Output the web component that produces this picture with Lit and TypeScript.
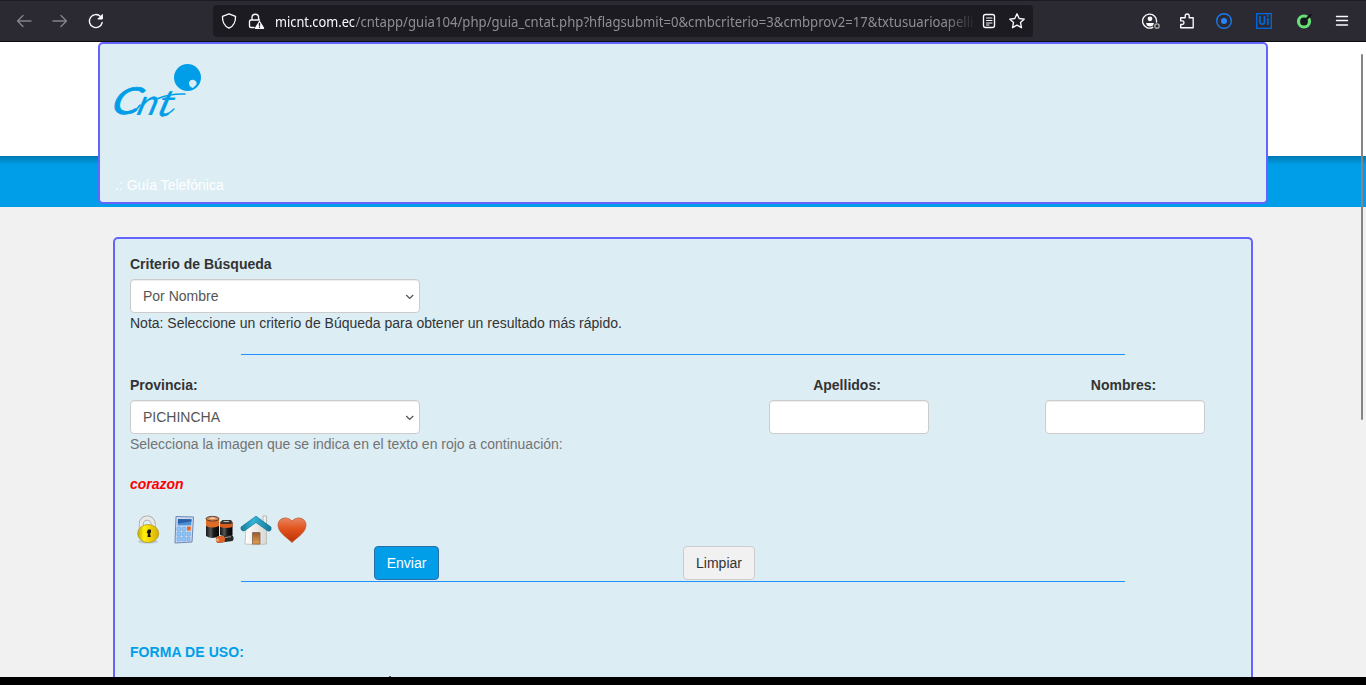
import { LitElement, html, css, svg } from "lit";
import { customElement } from "lit/decorators.js";

@customElement("browser-bar")
class BrowserBar extends LitElement {
  static styles = css`
    :host { display: flex; align-items: center; box-sizing: border-box; height: 42px; background: #2b2a33; border-top: 1px solid #1c1b22; border-bottom: 1px solid #0c0c0d; color: #fbfbfe; font-family: "Noto Sans", "Open Sans", sans-serif; padding: 0 16px; }
    svg { display: block; fill: none; stroke: #fbfbfe; stroke-width: 1.35; stroke-linecap: round; stroke-linejoin: round; flex: none; }
    .nav { display: flex; gap: 20px; width: 197px; }
    .dim { opacity: .42; }
    .address { display: flex; flex: none; align-items: center; box-sizing: border-box; width: 820px; height: 32px; padding: 0 8px; background: #1c1b22; border-radius: 4px; }
    .address .lock { margin-left: 11px; }
    .url { margin-left: 10px; overflow: visible; -webkit-mask-image: linear-gradient(90deg, #000 670px, transparent 702px); }
    .url text { stroke: none; fill: #8f8e95; font-size: 13.5px; }
    .url .host { fill: #fbfbfe; }
    .reader { margin-left: 5px; }
    .star { margin-left: 12px; }
    .tools { display: flex; align-items: center; margin-left: 109px; gap: 20px; }
    .puzzle { margin: 0 0 0 -1px; }
    .uipath { margin-left: 3px; }
    .check { margin: 0 2px 0 4px; }
    .nav, .tools { flex: none; }
  `;
  render() {
    return html`
      <div class="nav">
        <svg class="dim" width="16" height="16" viewBox="0 0 16 16"><path d="M15 8H1.500M7 2.500 1.500 8 7 13.500"/></svg>
        <svg class="dim" width="16" height="16" viewBox="0 0 16 16"><path d="M1 8h13.500M9 2.500 14.500 8 9 13.500"/></svg>
        <svg width="16" height="16" viewBox="0 0 16 16"><path d="M14.200 9.500A6.500 6.500 0 1 1 12.600 3.600"/><path d="M14.400 1.800v4.200h-4.200z" fill="#fbfbfe" stroke-width="1"/></svg>
      </div>
      <div class="address">
        <svg width="16" height="16" viewBox="0 0 16 16"><path d="M8 .8 14.500 3.300C14.800 8.500 12.500 13.500 8 15.200 3.500 13.500 1.200 8.500 1.500 3.300z"/></svg>
        <svg class="lock" width="17" height="16" viewBox="0 0 17 16"><path d="M4 7V4.500a3.300 3.300 0 0 1 6.600 0V7M6 14.500H3a1.500 1.500 0 0 1-1.500-1.500V8.500A1.500 1.500 0 0 1 3 7h8.500"/><path d="m11.500 8.500 4 6.700h-8z" fill="#fbfbfe"/><path d="M11.500 10.500v2M11.500 14.100v.1" stroke="#1c1b22"/></svg>
        <svg class="url" width="702" height="20"><text y="16" textLength="80" lengthAdjust="spacingAndGlyphs" class="host">micnt.com.ec</text><text x="80.500" y="16" textLength="618" lengthAdjust="spacingAndGlyphs">/cntapp/guia104/php/guia_cntat.php?hflagsubmit=0&amp;cmbcriterio=3&amp;cmbprov2=17&amp;txtusuarioapelli</text></svg>
        <svg class="reader" width="14" height="16" viewBox="0 0 14 16"><rect x="1.500" y="1.500" width="11" height="13" rx="2"/><path d="M4.500 5h5.500M4.500 7.500h5.500M4.500 10h5.500M4.500 12h2.500" stroke-width="1"/></svg>
        <svg class="star" width="18" height="18" viewBox="0 0 18 18"><path d="m9 1.800 2.200 4.700 5.100.6-3.800 3.500 1 5.100L9 13.200l-4.500 2.500 1-5.100-3.800-3.500 5.100-.6z"/></svg>
      </div>
      <div class="tools">
        <svg width="18" height="16" viewBox="0 0 18 16"><path d="M14.500 9a7 7 0 1 0-3.700 5.300"/><circle cx="8" cy="5.800" r="2.400" fill="#fbfbfe" stroke="none"/><path d="M4 10h8l-1 2.500q-3 2-6 0z" fill="#fbfbfe" stroke="none"/><circle cx="15" cy="13" r="2.200" stroke="#aaa"/></svg>
        <svg class="puzzle" width="16" height="16" viewBox="0 0 16 16"><path d="M1.700 6.500V4.700h4.500V3a2 2 0 0 1 4 0v1.700h4v10H1.700V11.500h1.500a1.800 1.800 0 0 0 0-3.600H1.700z"/></svg>
        <svg width="18" height="18" viewBox="0 0 18 18"><circle cx="9" cy="9" r="7.300" stroke="#1c78ed" stroke-width="1.400"/><circle cx="9" cy="9" r="3" fill="#2585ff" stroke="none"/></svg>
        <svg class="uipath" width="16" height="16" viewBox="0 0 16 16"><rect x=".7" y=".7" width="14.600" height="14.600" stroke="#0067df" stroke-linejoin="miter"/><text x="2.600" y="12.300" font-family="Open Sans" font-size="12" font-weight="700" textLength="11" lengthAdjust="spacingAndGlyphs" stroke="none" fill="#0067df">Ui</text></svg>
        <svg class="check" width="16" height="16" viewBox="0 0 16 16"><circle cx="8" cy="8.500" r="5.500" fill="#17171c" stroke="#66df76" stroke-width="3.200"/><path d="m10 6.500 4.500-4.500" stroke="#111116" stroke-width="2.300"/></svg>
        <svg width="16" height="16" viewBox="0 0 16 16" stroke-linecap="butt"><path d="M2.500 3.500h11M2.500 7.500h11M2.500 12h11"/></svg>
      </div>`;
  }
}

const lock = svg`<ellipse cx="16" cy="27.500" rx="10" ry="2" fill="#6d7c7c" opacity=".3"/><g fill="none"><path d="M9.200 15v-5a6 6 0 0 1 12 0v5" stroke="#a0a0a0" stroke-width="4.800"/><path d="M9.200 15v-5a6 6 0 0 1 12 0v5" stroke="#e9e9e7" stroke-width="3.400"/></g><ellipse cx="16.200" cy="19.500" rx="10.500" ry="9" fill="url(#gold)" stroke="#b49713" stroke-width=".8"/><path d="M16 15.500h3v3l-1 1 .8 3.500h-3.300l.5-3.200-1.300-1.300z" fill="#171407"/>`;
const calculator = svg`<path d="M8 2.500 25.500 3 24 28 7 29z" fill="#cbdaf1" stroke="#6e87b7"/><path d="m10 5 13.500.2-.3 6-13.500.3z" fill="#4a90d8"/><path d="m10 5 13.500.2-.1 2.300-13.500 2z" fill="#2960a7"/><g fill="#8fc6fb" stroke="#5c96d7" stroke-width=".5"><rect x="9" y="13" width="4" height="4" rx="1"/><rect x="14" y="13" width="4" height="4" rx="1"/><rect x="9" y="18" width="4" height="4" rx="1"/><rect x="14" y="18" width="4" height="4" rx="1"/><rect x="19" y="18" width="3.500" height="4" rx="1"/><rect x="9" y="23" width="4" height="4" rx="1"/><rect x="14" y="23" width="4" height="4" rx="1"/><rect x="19" y="23" width="3" height="4" rx="1"/></g><rect x="19" y="12.500" width="3.800" height="4" fill="#ed641d"/>`;
const batteries = svg`<path d="M2 5v17q6 4 13 0V5z" fill="url(#cell)"/><path d="M2 4.500V12q6 3 13 0V4.500z" fill="#dc6c28"/><ellipse cx="8.500" cy="4.700" rx="6.500" ry="2.300" fill="#d98c56" stroke="#3d2a20" stroke-width=".8"/><ellipse cx="8.500" cy="4.300" rx="3" ry=".8" fill="#f6d6b8"/><path d="M16 10v11q7 3 12.500 0V8z" fill="url(#cell)"/><path d="M16 8.500v4.500q6 2 12.500 0V8z" fill="#d85c20"/><path d="m16 8.500 2.500-2.500h8.500l1.500 2.300-1.500 1.700H17z" fill="#3a3632"/><path d="M19.500 7.500h5.500" stroke="#bbb"/><path d="m13 22.500 15-1.500q3 3 .5 6l-15 2q-3-3-.5-6.500z" fill="#292929"/><path d="m13 22.500 7-.7q2 3 .5 6.200l-7 1q-3-3-.5-6.500z" fill="#df6428"/><circle cx="13.500" cy="26" r="1.500" fill="#edaa7e"/><path d="m21 23.500 6-.8" stroke="#999"/>`;
const house = svg`<path d="M23 2h3.500v10H23z" fill="#f1f1ef" stroke="#aaa" stroke-width=".8"/><path d="M6 15 16 6l10.500 9v15Q16 31.500 5 30z" fill="url(#wall)" stroke="#b1b1ae" stroke-width=".7"/><path d="M12.500 18.500h7.500V30h-7.500z" fill="url(#door)" stroke="#81634d" stroke-width=".8"/><path d="M1 15.500V13L16 2.200 31 13v3q-2 2-4 .5L16 8.500 5 16.500q-2 1.500-4-1z" fill="url(#roof)" stroke="#187795" stroke-width=".7"/>`;
const heart = svg`<path d="M16 28.500C11 23.500 2 18.500 2 11 2 4 11 1.500 16 7 21 1.500 30 4 30 11c0 7.500-9 12.500-14 17.500z" fill="url(#red)" stroke="#bd522b" stroke-width=".7"/>`;
const defs = svg`<defs><linearGradient id="gold"><stop stop-color="#bda90d"/><stop offset=".3" stop-color="#fff00a"/><stop offset="1" stop-color="#d7ad06"/></linearGradient><linearGradient id="cell"><stop stop-color="#171717"/><stop offset=".35" stop-color="#555"/><stop offset=".6" stop-color="#181818"/><stop offset="1" stop-color="#050505"/></linearGradient><linearGradient id="wall"><stop stop-color="#fff"/><stop offset="1" stop-color="#d7d7d4"/></linearGradient><linearGradient id="door" x2="0" y2="1"><stop stop-color="#995832"/><stop offset="1" stop-color="#e2a14d"/></linearGradient><linearGradient id="roof"><stop stop-color="#187998"/><stop offset=".4" stop-color="#31b6da"/><stop offset="1" stop-color="#167797"/></linearGradient><linearGradient id="red" x2="0" y2="1"><stop stop-color="#e88660"/><stop offset=".45" stop-color="#e2521c"/><stop offset="1" stop-color="#bb3209"/></linearGradient></defs>`;

@customElement("app-root")
class AppRoot extends LitElement {
  static styles = css`
    :host { display: flex; flex-direction: column; height: 685px; overflow: hidden; background: #f1f1f1; font: 14px/20px "Liberation Sans", Arial, sans-serif; color: #333; position: relative; }
    * { box-sizing: border-box; }
    browser-bar { flex: none; }
    .header { flex: none; height: 165px; background: linear-gradient(#0079b2 0, #009ee8 9px) 0 114px / 100% 51px no-repeat, #fff; }
    .brand { display: flex; flex-direction: column; justify-content: space-between; width: 1170px; height: 162px; margin: 0 auto; padding: 18px 15px 7px; border: 2px solid #6464ff; border-radius: 5px; background: #dcedf4; color: #fff; }
    .logo { display: block; overflow: visible; }
    .panel { flex: 1; min-height: 0; overflow: hidden; width: 1140px; margin: 30px auto 0; padding: 15px; border: 2px solid #6464ff; border-bottom: 0; border-radius: 5px 5px 0 0; background: #dcedf4; }
    label { display: block; font-weight: 700; margin-bottom: 5px; }
    .control { display: flex; align-items: center; justify-content: space-between; width: 290px; height: 34px; padding: 0 5px 0 12px; background: #fff; border: 1px solid #ccc; border-radius: 4px; box-shadow: inset 0 1px 1px rgba(0,0,0,.075); color: #555; }
    .control svg { display: block; margin-top: 2px; }
    .rule { width: 884px; height: 1px; margin: 21px auto 20px; background: #1e90ff; }
    .fields { display: grid; grid-template-columns: 639px 276px 160px; }
    .fields .center { text-align: center; width: 160px; }
    .short { width: 160px; }
    .center label { margin-left: -4px; }
    .center:last-child label { margin-left: -3px; }
    .hint { color: #737373; }
    .answer { margin-top: 20px; color: #f00; font-weight: 700; font-style: italic; }
    .choices { display: flex; gap: 4px; height: 32px; margin: 20px 0 0 2px; }
    .actions { display: flex; gap: 244px; padding-left: 244px; }
    button { width: 72px; height: 34px; padding: 0; border: 1px solid #ccc; border-radius: 4px; font: inherit; background: #f1f1f1; color: #333; }
    .send { width: 65px; background: #009ee8; border-color: #2e6da4; color: #fff; }
    .last { margin: 1px auto 60px; }
    .usage { color: #009ee8; font-weight: 700; letter-spacing: .07px; }
    .mark { display: block; margin: 14px 0 0 259px; }
    .bottom { flex: none; height: 8px; background: #000; }
    .thumb { position: absolute; top: 54px; right: 3px; width: 2px; height: 366px; background: #858585; border-radius: 1px; }
  `;
  arrow() {
    return html`<svg width="9" height="6" viewBox="0 0 9 6"><path d="m1.200 1 3.500 3.400L8.200 1" fill="none" stroke="#555" stroke-width="1.300"/></svg>`;
  }
  render() {
    return html`
      <browser-bar></browser-bar>
      <header class="header"><div class="brand">
        <svg class="logo" width="90" height="60" viewBox="0 0 90 60" fill="#009ee8" font-family="Lato" font-style="italic">
          <g transform="translate(0 53) skewX(-16)" stroke="#009ee8" stroke-width=".8"><text x="-5.500" y="-1.500" font-size="37" textLength="28" lengthAdjust="spacingAndGlyphs">C</text><text x="20.500" y="0" font-size="36" stroke-width=".2" textLength="20" lengthAdjust="spacingAndGlyphs">n</text><text x="41" y=".5" font-size="37" stroke-width=".2" textLength="15" lengthAdjust="spacingAndGlyphs">t</text></g>
          <path d="M43 36.500q12-5 27-4.500M47 54q6-1 12-7M16 51q5-2 9-8" fill="none" stroke="#009ee8" stroke-width="1.500" stroke-linecap="round"/>
          <circle cx="72.500" cy="15.500" r="13.500"/><path d="M74 21q1-4 5-3 4 2 2 5l-3 3q-4-1-4-5z" fill="#dcedf4"/>
        </svg>
        <span>.: Guía Telefónica</span>
      </div></header>
      <main class="panel">
        <label>Criterio de Búsqueda</label>
        <div class="control">Por Nombre ${this.arrow()}</div>
        <div>Nota: Seleccione un criterio de Búqueda para obtener un resultado más rápido.</div>
        <div class="rule"></div>
        <div class="fields">
          <div><label>Provincia:</label><div class="control">PICHINCHA ${this.arrow()}</div></div>
          <div class="center"><label>Apellidos:</label><div class="control short"></div></div>
          <div class="center"><label>Nombres:</label><div class="control short"></div></div>
        </div>
        <div class="hint">Selecciona la imagen que se indica en el texto en rojo a continuación:</div>
        <div class="answer">corazon</div>
        <div class="choices">${[lock, calculator, batteries, house, heart].map(icon => html`<svg width="32" height="32" viewBox="0 0 32 32">${defs}${icon}</svg>`)}</div>
        <div class="actions"><button class="send">Enviar</button><button>Limpiar</button></div>
        <div class="rule last"></div>
        <div class="usage">FORMA DE USO:</div>
        <svg class="mark" width="2" height="1" viewBox="0 0 2 1"><path d="M0 0h2v1H0z" fill="#555"/></svg>
      </main>
      <div class="bottom"></div><div class="thumb"></div>`;
  }
}
